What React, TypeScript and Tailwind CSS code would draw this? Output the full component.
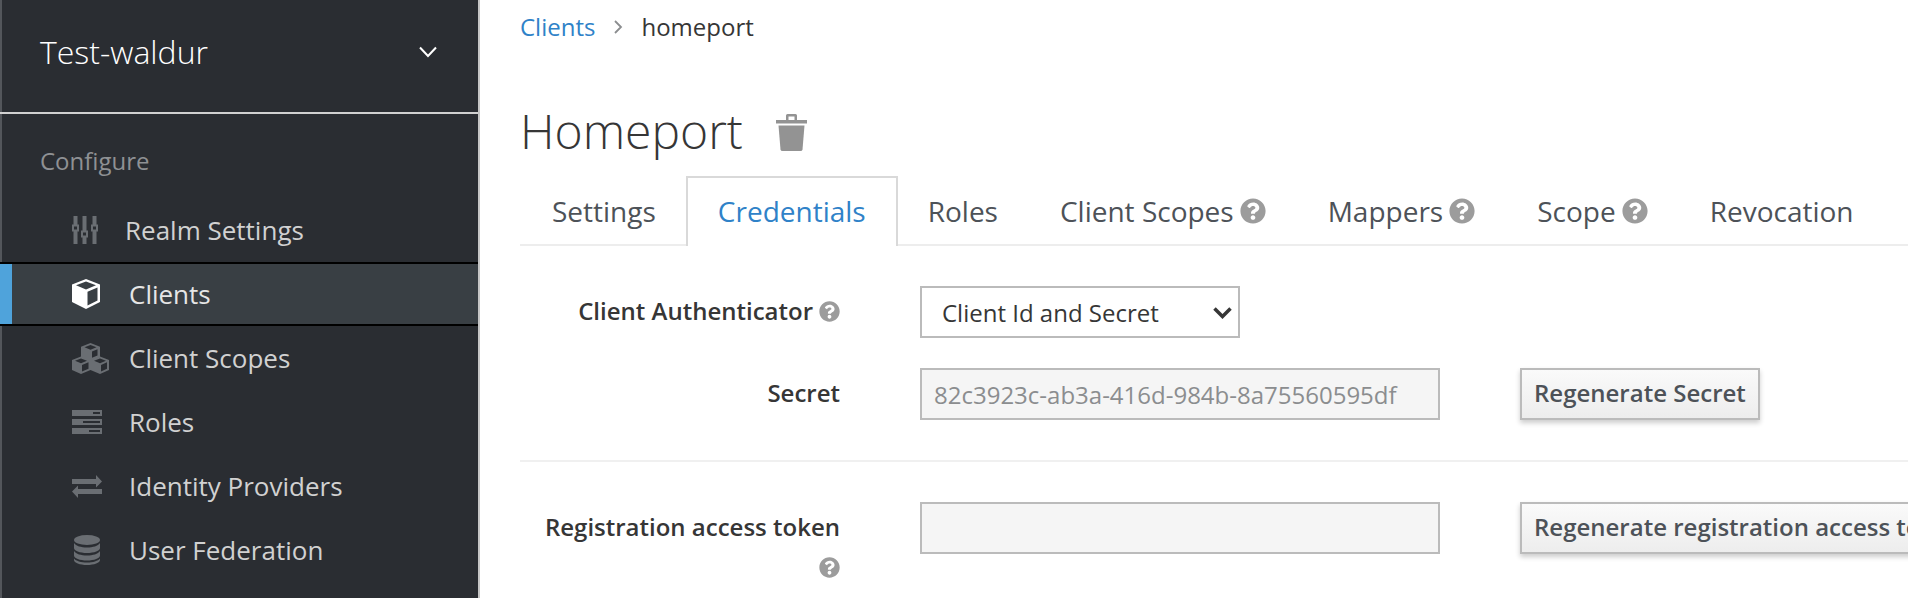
import React from "react";
import { FaQuestionCircle } from "react-icons/fa";

const Sliders = () => (
  <svg width="26" height="28" viewBox="0 0 26 28" fill="#6a6e73">
    <path fillRule="evenodd" d="M1.500 0h4v8.500H7v7H5.500V28h-4V15.500H0v-7h1.500zM2 10.500v3h3v-3z" />
    <path fillRule="evenodd" d="M10.500 0h4v14.500H16v7h-1.500V28h-4v-6.500H9v-7h1.500zM11 16.500v3h3v-3z" />
    <path fillRule="evenodd" d="M20.500 0h4v8.500H26v7h-1.500V28h-4V15.500H19v-7h1.500zM21 10.500v3h3v-3z" />
  </svg>
);
const Cube = () => (
  <svg width="28" height="30" viewBox="0 0 28 30" fill="#ffffff">
    <path fillRule="evenodd" d="M14 0l14 5.500v17.500l-14 7-14-7V5.500zM14 2.500L4 6.300l10 4.200 10-4.200zM15.500 12.800v13.700l10-5V8.600z" />
  </svg>
);
const Cubes = () => (
  <svg width="37" height="31" viewBox="0 0 37 31" fill="#6a6e73">
    <path fillRule="evenodd" d="M18.500 0l9.500 3.700v9.800l9 3.500v10l-9 4-9.500-4-9.500 4-9-4V17l9-3.500V3.700zM18.500 2l-6 2.300 6 2.500 6-2.500zM9 15.500l-6 2.300 6 2.500 6-2.500zM28 15.500l-6 2.300 6 2.500 6-2.500zM20 8.500v6.300l5.500-2.300V6.300zM10 22v6.500l6.500-2.800v-6.400zM29 22v6.500l6-2.800v-6.400z" />
  </svg>
);
const Server = () => (
  <svg width="30" height="24" viewBox="0 0 30 24" fill="#6a6e73">
    <path fillRule="evenodd" d="M0 0h30v6H0zM21 2v2h7V2zM0 9h30v6H0zM11 11v2h17v-2zM0 18h30v6H0zM17 20v2h11v-2z" />
  </svg>
);
const Exchange = () => (
  <svg width="30" height="23" viewBox="0 0 30 23" fill="#6a6e73">
    <path d="M0 4h24V0l6 6.500-6 6V9H0zM30 14H6v-3.500L0 16.500 6 23v-4h24z" />
  </svg>
);
const Database = () => (
  <svg width="26" height="30" viewBox="0 0 26 30" fill="#6a6e73">
    <ellipse cx="13" cy="5" rx="13" ry="5" />
    <path d="M0 8c2 3 7 4.500 13 4.500S24 11 26 8v5c0 2.800-5.800 5-13 5S0 15.800 0 13z" />
    <path d="M0 16c2 3 7 4.500 13 4.500S24 19 26 16v4.500c0 2.800-5.800 5-13 5s-13-2.200-13-5z" />
    <path d="M0 23.500c2 2.500 7 4 13 4s11-1.500 13-4V25c0 2.800-5.800 5-13 5S0 27.800 0 25z" />
  </svg>
);
const Trash = () => (
  <svg width="31" height="37" viewBox="0 0 31 37" fill="#939393">
    <path fillRule="evenodd" d="M0 6h10V1.500q0-1.500 1.500-1.500h8Q21 0 21 1.500V6h10v3.500H0zM12.500 2.500V6h6V2.500z" />
    <path d="M2.500 11.500h26L26.500 35.500q-.2 1.500-2 1.500h-18q-1.800 0-2-1.500z" />
  </svg>
);
const Help = ({ s = 20 }: { s?: number }) => (
  <FaQuestionCircle size={s} className="shrink-0 text-[#9c9c9c]" />
);

const items: { label: string; icon: React.ReactNode; active?: boolean }[] = [
  { label: "Clients", icon: <Cube />, active: true },
  { label: "Client Scopes", icon: <Cubes /> },
  { label: "Roles", icon: <Server /> },
  { label: "Identity Providers", icon: <Exchange /> },
  { label: "User Federation", icon: <span className="ml-[2px] block"><Database /></span> },
];

const Tab = ({ label, help, active }: { label: string; help?: boolean; active?: boolean }) =>
  active ? (
    <div className="mx-[-1px] mb-[-2px] flex h-[70px] items-center border-2 border-b-0 border-[#d9d9d9] bg-white px-[30px] pb-[3px] text-[#2f82c8]">{label}</div>
  ) : (
    <div className="flex h-[67px] items-center gap-[6px] px-[31px] text-[#4d5258]">
      {label}
      {help && <Help s={26} />}
    </div>
  );

const inputCls =
  "h-[52px] w-[520px] shrink-0 border-2 border-[#bbbbbb] bg-[#f5f5f5] px-[12px] text-[24px] text-[#8b8d8f] font-['Open_Sans',sans-serif]";
const btnCls =
  "h-[52px] shrink-0 whitespace-nowrap border-2 border-[#bbbbbb] bg-gradient-to-b from-[#fafafa] to-[#ededed] px-[12px] pb-[2px] text-[24px] font-semibold text-[#4d5258] shadow-[0_3px_5px_rgba(0,0,0,0.2)]";

export default function App() {
  return (
    <div className="flex h-[598px] w-[1908px] overflow-hidden bg-white font-['Open_Sans',sans-serif]">
      <aside className="flex h-full w-[480px] shrink-0 flex-col border-r-2 border-l-2 border-r-[#c6c6c6] border-l-[#53565b] bg-[#2a2d32]">
        <div className="ml-[-2px] flex h-[114px] items-center justify-between border-b-2 border-[#d1d1d1] pr-[41px] pl-[40px] pb-[8px]">
          <span className="text-[32px] font-light leading-none text-white">Test-waldur</span>
          <svg width="18" height="12" viewBox="0 0 18 12" fill="none" stroke="#ffffff" strokeWidth="2">
            <path d="M1 1.500l8 8.500 8-8.500" />
          </svg>
        </div>
        <div className="pt-[29px] pl-[38px] text-[24px] leading-[36px] text-[#8f9194]">Configure</div>
        <div className="mt-[19px] flex h-[64px] items-center pl-[70px] text-[26px] text-[#d1d1d1]">
          <span className="w-[53px]"><Sliders /></span>
          Realm Settings
        </div>
        {items.map((it) => (
          <div
            key={it.label}
            className={
              it.active
                ? "ml-[-2px] flex h-[64px] items-center border-y-2 border-black bg-[#393f44] text-[26px] text-[#e6e6e6]"
                : "flex h-[64px] items-center pl-[70px] text-[26px] text-[#d1d1d1]"
            }
          >
            {it.active && <span className="mr-[60px] h-full w-[12px] bg-[#4fa3db]" />}
            <span className="w-[57px]">{it.icon}</span>
            {it.label}
          </div>
        ))}
      </aside>

      <main className="min-w-0 flex-1 overflow-hidden pl-[40px]">
        <div className="flex h-[54px] items-center text-[24px]">
          <span className="text-[#2f82c8]">Clients</span>
          <svg className="mr-[18px] ml-[19px]" width="9" height="14" viewBox="0 0 9 14" fill="none" stroke="#8b8d8f" strokeWidth="1.800"><path d="M1 1l6 6-6 6" /></svg>
          <span className="text-[#363636]">homeport</span>
        </div>
        <div className="mt-[39px] flex h-[75px] items-center">
          <h1 className="text-[48px] font-light leading-none text-[#363636]">Homeport</h1>
          <span className="mt-[4px] ml-[33px]"><Trash /></span>
        </div>
        <div className="flex h-[78px] items-end border-b-2 border-[#ededed] pl-[1px] text-[28px]">
          <Tab label="Settings" />
          <Tab label="Credentials" active />
          <Tab label="Roles" />
          <Tab label="Client Scopes" help />
          <Tab label="Mappers" help />
          <Tab label="Scope" help />
          <Tab label="Revocation" />
        </div>

        <div className="mt-[40px] flex h-[52px] items-center">
          <div className="flex w-[320px] shrink-0 items-center justify-end gap-[6px] pb-[2px] text-[24px] font-semibold text-[#363636]">
            Client Authenticator <Help s={21} />
          </div>
          <div className="relative ml-[80px] h-[52px] w-[320px]">
            <select defaultValue="a" className="h-[52px] w-[320px] appearance-none border-2 border-[#bbbbbb] bg-white pt-[1px] pl-[20px] text-[24px] text-[#363636]">
              <option value="a">Client Id and Secret</option>
            </select>
            <svg className="pointer-events-none absolute top-[21px] right-[8px]" width="19" height="12" viewBox="0 0 19 12" fill="none" stroke="#363636" strokeWidth="3.500">
              <path d="M1.500 1.500l8 8 8-8" />
            </svg>
          </div>
        </div>
        <div className="mt-[30px] flex h-[52px] items-center">
          <div className="w-[320px] shrink-0 pb-[2px] text-right text-[24px] font-semibold text-[#363636]">Secret</div>
          <input readOnly value="82c3923c-ab3a-416d-984b-8a75560595df" className={"ml-[80px] " + inputCls} />
          <button className={"ml-[80px] " + btnCls}>Regenerate Secret</button>
        </div>
        <div className="mt-[40px] border-t-2 border-[#f0f0f0]" />
        <div className="mt-[40px] flex items-start">
          <div className="flex w-[320px] shrink-0 flex-col items-end text-[24px] font-semibold text-[#363636]">
            <span className="mt-[7px] leading-[36px] whitespace-nowrap">Registration access token</span>
            <span className="mt-[12px]"><Help s={21} /></span>
          </div>
          <input readOnly value="" className={"ml-[80px] " + inputCls} />
          <button className={"ml-[80px] " + btnCls}>Regenerate registration access token</button>
        </div>
      </main>
    </div>
  );
}
